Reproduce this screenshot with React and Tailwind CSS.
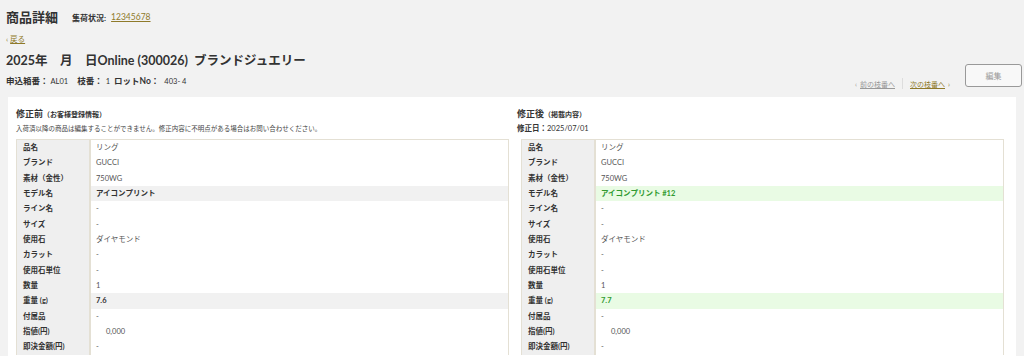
import React from "react";

const rows = [
  { label: "品名", before: "リング", after: "リング" },
  { label: "ブランド", before: "GUCCI", after: "GUCCI" },
  { label: "素材（金性）", before: "750WG", after: "750WG" },
  { label: "モデル名", before: "アイコンプリント", after: "アイコンプリント #12", changed: true },
  { label: "ライン名", before: "-", after: "-" },
  { label: "サイズ", before: "-", after: "-" },
  { label: "使用石", before: "ダイヤモンド", after: "ダイヤモンド" },
  { label: "カラット", before: "-", after: "-" },
  { label: "使用石単位", before: "-", after: "-" },
  { label: "数量", before: "1", after: "1" },
  { label: "重量 (g)", before: "7.6", after: "7.7", changed: true },
  { label: "付属品", before: "-", after: "-" },
  { label: "指値(円)", before: "0,000", after: "0,000", indent: true },
  { label: "即決金額(円)", before: "-", after: "-" },
];

const font = { fontFamily: '"Lato", "Noto Sans CJK JP", sans-serif' };

// 比較テーブル
const DetailTable = ({ side }) => (
  <div className="border border-[#e4e0d4] border-b-0">
    {rows.map((r) => {
      const value = side === "before" ? r.before : r.after;
      let valueCls = "text-[#555]";
      if (r.changed && side === "before") valueCls = "bg-[#f1f1f1] font-bold text-[#333]";
      if (r.changed && side === "after") valueCls = "bg-[#e9fbe4] font-bold text-[#2f9a2f]";
      return (
        <div key={r.label} className="flex h-[15.35px] items-center text-[7.5px] leading-none">
          <div className="flex h-full w-[74px] shrink-0 items-center border-r-2 border-[#e4e0d4] bg-[#efefef] pl-[6px] font-bold text-[#333]">
            {r.label}
          </div>
          <div className={`flex h-full flex-1 items-center ${r.indent ? "pl-[15px]" : "pl-[5px]"} ${valueCls}`}>
            {value}
          </div>
        </div>
      );
    })}
  </div>
);

const App = () => {
  return (
    <div className="h-[356px] w-[1024px] overflow-hidden bg-[#f2f2f2] text-[#333]" style={font}>
      <div className="px-[6px] pt-[7px]">
        <div className="flex h-[20px] items-center gap-[14px]">
          <h1 className="text-[13px] font-bold leading-[20px] text-[#333]">商品詳細</h1>
          <div className="flex items-center gap-[5px] pt-[1px] text-[8px]">
            <span className="font-bold">集荷状況:</span>
            <a className="text-[8.5px] text-[#8f7a2a] underline">12345678</a>
          </div>
        </div>
        <div className="mt-[8px] flex h-[10px] items-center gap-[2px] text-[7.5px] leading-[10px] text-[#8f7a2a]">
          <span>‹</span>
          <a className="underline">戻る</a>
        </div>
        <div className="mt-[7px] flex items-end justify-between">
          <div>
            <h2 className="text-[12.5px] font-bold leading-[18px]">
              2025年　月　日Online (300026)&nbsp;&nbsp;ブランドジュエリー
            </h2>
            <p className="mt-[5px] flex items-baseline text-[8.5px] leading-[12px]">
              <b>申込箱番：</b>
              <span className="ml-[2px] text-[7.5px]">AL01</span>
              <b className="ml-[9px]">枝番：</b>
              <span className="ml-[3px] text-[7.5px]">1</span>
              <b className="ml-[4px]">ロットNo：</b>
              <span className="ml-[5px] text-[7.5px]">403- 4</span>
            </p>
          </div>
          <div className="mr-[-4px] flex items-end gap-[15px]">
            <div className="mb-[-1px] flex items-center text-[7px] leading-[10px]">
              <span className="text-[#999]">‹</span>
              <a className="ml-[3px] text-[#999] underline">前の枝番へ</a>
              <span className="mx-[7px] h-[11px] w-px bg-[#ddd]" />
              <a className="text-[#8f7a2a] underline">次の枝番へ</a>
              <span className="ml-[3px] text-[#8f7a2a]">›</span>
            </div>
            <button className="mb-[1px] h-[23px] w-[57px] rounded-[3px] border border-[#999] bg-[#f8f8f8] text-[8px] text-[#999]">
              編集
            </button>
          </div>
        </div>
      </div>

      <div className="mx-[8px] mt-[9px] grid h-[300px] grid-cols-2 gap-[6px] bg-white px-[8px] pt-[11px]">
        <section>
          <h3 className="text-[9px] font-bold leading-[12px]">
            修正前<span className="text-[7px]">（お客様登録情報）</span>
          </h3>
          <p className="mt-[4px] text-[6.5px] leading-[10px] text-[#444]">
            入荷済以降の商品は編集することができません。修正内容に不明点がある場合はお問い合わせください。
          </p>
          <div className="mt-[5px]">
            <DetailTable side="before" />
          </div>
        </section>
        <section className="pr-[4px] pl-[2px]">
          <h3 className="text-[9px] font-bold leading-[12px]">
            修正後<span className="text-[7px]">（掲載内容）</span>
          </h3>
          <p className="mt-[4px] text-[7.5px] leading-[10px] font-bold">
            修正日：<span className="font-normal">2025/07/01</span>
          </p>
          <div className="mt-[5px] pl-[4px]">
            <DetailTable side="after" />
          </div>
        </section>
      </div>
    </div>
  );
};

export default App;
